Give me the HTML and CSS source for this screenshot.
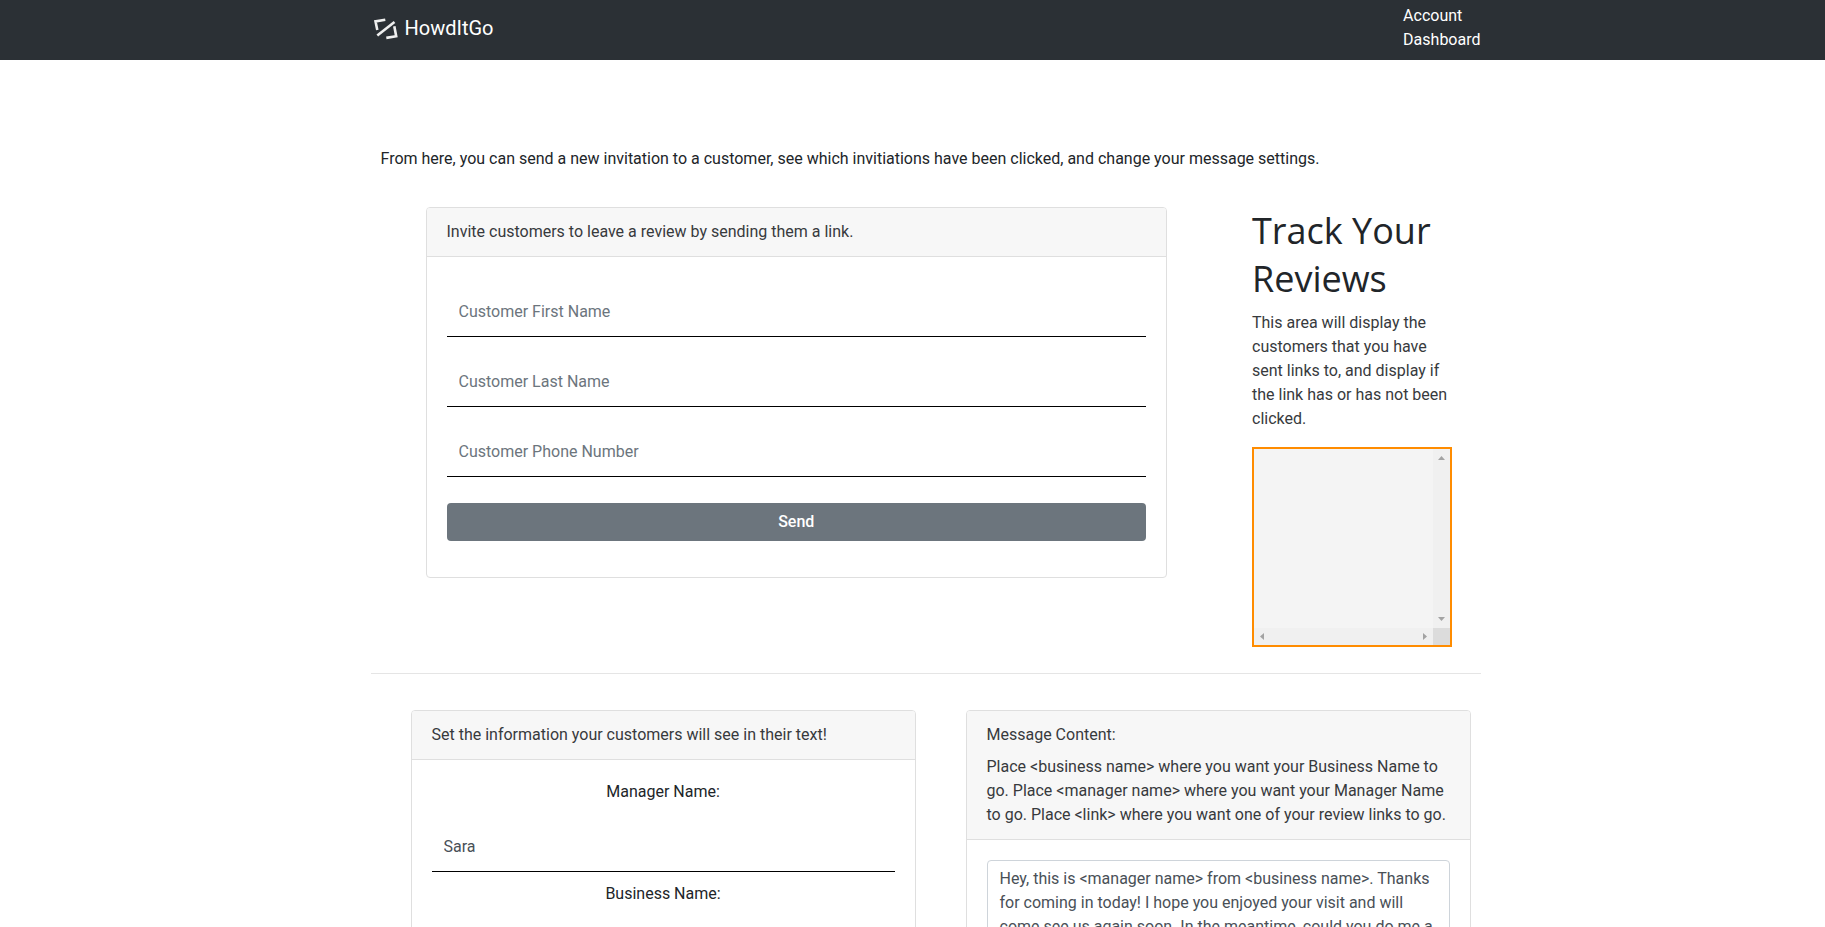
FILE: index.html
```html
<!DOCTYPE html>
<html lang="en">
<head>
<meta charset="utf-8">
<meta name="viewport" content="width=device-width, initial-scale=1">
<title>HowdItGo</title>
<link rel="stylesheet" href="styles.css">
</head>
<body>
<header class="navbar">
  <div class="container navbar-inner">
    <a class="brand" href="#">
      <svg class="brand-logo" viewBox="0 0 30 30" width="30" height="30" aria-hidden="true">
        <g fill="none" stroke="#efefef" stroke-width="2.600">
          <path d="M14.300 6.700 L4.500 8.400 L6.300 17"/>
          <path d="M6.300 22.500 L23.500 9"/>
          <path d="M23.300 13.300 L25.200 23.200 L15.300 24.900"/>
        </g>
      </svg>
      <span>HowdItGo</span>
    </a>
    <nav>
      <ul class="nav-links">
        <li><a href="#">Account</a></li>
        <li><a href="#">Dashboard</a></li>
      </ul>
    </nav>
  </div>
</header>
<main class="page">
  <div class="container">
    <p class="intro">From here, you can send a new invitation to a customer, see which invitiations have been clicked, and change your message settings.</p>
    <div class="top-row">
      <section class="invite">
        <div class="card">
          <div class="card-header">Invite customers to leave a review by sending them a link.</div>
          <form class="card-body invite-form">
            <input class="line-input" type="text" placeholder="Customer First Name" aria-label="Customer First Name">
            <input class="line-input" type="text" placeholder="Customer Last Name" aria-label="Customer Last Name">
            <input class="line-input" type="tel" placeholder="Customer Phone Number" aria-label="Customer Phone Number">
            <button class="btn" type="button">Send</button>
          </form>
        </div>
      </section>
      <section class="track">
        <h1>Track Your Reviews</h1>
        <p>This area will display the customers that you have sent links to, and display if the link has or has not been clicked.</p>
        <div class="review-box">
          <div></div>
          <div class="bar bar-v">
            <svg viewBox="0 0 7 4" width="7" height="4"><path d="M0 4 L3.500 0 L7 4Z" fill="#a3a3a3"/></svg>
            <svg viewBox="0 0 7 4" width="7" height="4"><path d="M0 0 L3.500 4 L7 0Z" fill="#a3a3a3"/></svg>
          </div>
          <div class="bar bar-h">
            <svg viewBox="0 0 4 7" width="4" height="7"><path d="M4 0 L0 3.500 L4 7Z" fill="#a3a3a3"/></svg>
            <svg viewBox="0 0 4 7" width="4" height="7"><path d="M0 0 L4 3.500 L0 7Z" fill="#a3a3a3"/></svg>
          </div>
          <div class="corner"></div>
        </div>
      </section>
    </div>
    <hr class="divider">
    <div class="settings-row">
      <section class="card">
        <div class="card-header">Set the information your customers will see in their text!</div>
        <form class="card-body names-form">
          <label for="manager">Manager Name:</label>
          <input class="line-input" id="manager" type="text" value="Sara">
          <label for="business">Business Name:</label>
          <input class="line-input" id="business" type="text">
        </form>
      </section>
      <section class="card">
        <div class="card-header">
          <label class="message-label" for="message">Message Content:</label>
          <p>Place &lt;business name&gt; where you want your Business Name to go. Place &lt;manager name&gt; where you want your Manager Name to go. Place &lt;link&gt; where you want one of your review links to go.</p>
        </div>
        <form class="card-body">
          <textarea class="message" id="message" rows="6">Hey, this is &lt;manager name&gt; from &lt;business name&gt;. Thanks for coming in today! I hope you enjoyed your visit and will come see us again soon. In the meantime, could you do me a</textarea>
        </form>
      </section>
    </div>
  </div>
</main>
</body>
</html>
```

FILE: styles.css
```css
*, *::before, *::after { box-sizing: border-box; }

html { height: 100%; }

body {
  display: flex;
  flex-direction: column;
  height: 100%;
  margin: 0;
  overflow: hidden;
  font-family: Roboto, "Liberation Sans", sans-serif;
  font-size: 16px;
  line-height: 24px;
  color: #212529;
  background: #fff;
}

p, h1, ul { margin: 0; padding: 0; }

input, textarea, button { font: inherit; margin: 0; }

.navbar {
  flex: none;
  padding-left: 26px;
  background: #2b3035;
  color: #fff;
}

.page {
  flex: 1;
  min-height: 0;
  padding-left: 26px;
  overflow-y: auto;
}

.container {
  width: 100%;
  max-width: 1110px;
  margin: 0 auto;
}

.navbar-inner {
  display: flex;
  justify-content: space-between;
  align-items: center;
  padding: 4px 0 8px;
}

.brand {
  display: flex;
  align-items: center;
  gap: 4px;
  font-size: 20px;
  color: #fff;
  text-decoration: none;
}

.nav-links { list-style: none; }

.nav-links a { color: #fff; text-decoration: none; }

.intro { padding: 87px 10px 36px; }

.top-row {
  display: grid;
  grid-template-columns: 3fr 1fr;
  align-items: start;
}

.invite { padding: 0 36px 0 55px; }

.track { padding: 0 29px 0 49px; }

.card {
  border: 1px solid #dfdfdf;
  border-radius: 4px;
  background: #fff;
}

.card-header {
  padding: 12px 20px;
  background: #f7f7f7;
  border-bottom: 1px solid #dfdfdf;
  border-radius: 3px 3px 0 0;
}

.card-header, .track p { color: #373a3d; }

.card-body { padding: 20px; }

.line-input {
  display: block;
  width: 100%;
  height: 50px;
  padding: 0 12px;
  border: 0;
  border-bottom: 1px solid #000;
  border-radius: 0;
  background: #fff;
  color: #495057;
}

.line-input::placeholder { color: #6c757d; opacity: 1; }

.invite-form {
  display: flex;
  flex-direction: column;
  gap: 20px;
  padding: 30px 20px 36px;
}

.btn {
  height: 38px;
  margin-top: 6px;
  border: 0;
  border-radius: 4px;
  background: #6c757d;
  color: #fff;
  font-weight: 500;
}

.track h1 {
  font-family: "Open Sans", "Noto Sans", sans-serif;
  font-size: 36px;
  font-weight: 400;
  line-height: 48px;
  margin-bottom: 8px;
}

.track p { margin-bottom: 16px; }

.review-box {
  display: grid;
  grid-template: 1fr 17px / 1fr 17px;
  height: 200px;
  border: 2px solid #ff8c00;
  background: #f4f4f4;
}

.bar {
  display: flex;
  justify-content: space-between;
  align-items: center;
  background: #f0f0f0;
}

.bar-v { flex-direction: column; padding: 7px 0; }

.bar-h { padding: 0 6px; }

.corner { background: #dcdcdc; }

.divider {
  width: 100%;
  margin: 26px 0 36px;
  border: 0;
  border-top: 1px solid #e5e5e5;
}

.settings-row {
  display: grid;
  grid-template-columns: 1fr 1fr;
  gap: 50px;
  padding: 0 10px 40px 40px;
}

.names-form label { display: block; text-align: center; }

.names-form .line-input { margin: 18px 0 10px; }

.message-label { display: block; margin-bottom: 8px; }

.message {
  display: block;
  width: 100%;
  padding: 6px 12px;
  border: 1px solid #ced4da;
  border-radius: 4px;
  background: #fff;
  color: #495057;
  resize: vertical;
}
```
